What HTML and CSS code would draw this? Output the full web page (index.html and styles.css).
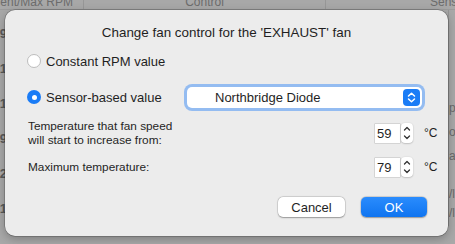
FILE: index.html
```html
<!DOCTYPE html>
<html lang="en">
<head>
<meta charset="UTF-8">
<title>Change fan control</title>
<link rel="stylesheet" href="styles.css">
</head>
<body>
<div class="window">
    <!-- dimmed table behind the sheet -->
    <div class="table">
        <div class="thead">
            <div class="th th-rpm"><span>Current/Max RPM</span></div>
            <div class="th th-control">Control</div>
            <div class="th th-sensor">Sensor</div>
        </div>
        <div class="tbody">
            <div class="col-num">
                <div class="cell">1799</div>
                <div class="cell">1201</div>
                <div class="cell">1201</div>
                <div class="cell">1799</div>
                <div class="cell">1202</div>
                <div class="cell">1201</div>
            </div>
            <div class="col-gap"></div>
            <div class="col-side">
                <div class="side-line l1">pi</div>
                <div class="side-line">oc</div>
                <div class="side-line">at</div>
                <div class="side-line l4">/l</div>
                <div class="side-line">/l</div>
            </div>
        </div>
    </div>

    <!-- sheet -->
    <div class="sheet">
        <div class="title">Change fan control for the 'EXHAUST' fan</div>
        <div class="body">
            <div class="radio-row">
                <span class="radio"></span>
                <span>Constant RPM value</span>
            </div>
            <div class="radio-row row-sensor">
                <span class="radio checked"></span>
                <span>Sensor-based value</span>
                <div class="popup">
                    <span class="popup-text">Northbridge Diode</span>
                    <span class="popup-arrow">
                        <svg width="17" height="17" viewBox="0 0 17 17">
                            <path d="M5.5 7 L8.5 4.2 L11.5 7 M5.5 10 L8.5 12.8 L11.5 10" fill="none" stroke="#fff" stroke-width="1.5" stroke-linecap="round" stroke-linejoin="round"/>
                        </svg>
                    </span>
                </div>
            </div>
            <div class="temp-row two-line">
                <div class="temp-label">Temperature that fan speed<br>will start to increase from:</div>
                <div class="field">59</div>
                <div class="stepper">
                    <svg width="12" height="20" viewBox="0 0 12 20">
                        <path d="M3.5 7 L6 4.5 L8.5 7 M3.5 13 L6 15.5 L8.5 13" fill="none" stroke="#333" stroke-width="1.3" stroke-linecap="round" stroke-linejoin="round"/>
                    </svg>
                </div>
                <div class="unit">°C</div>
            </div>
            <div class="temp-row">
                <div class="temp-label">Maximum temperature:</div>
                <div class="field">79</div>
                <div class="stepper">
                    <svg width="12" height="20" viewBox="0 0 12 20">
                        <path d="M3.5 7 L6 4.5 L8.5 7 M3.5 13 L6 15.5 L8.5 13" fill="none" stroke="#333" stroke-width="1.3" stroke-linecap="round" stroke-linejoin="round"/>
                    </svg>
                </div>
                <div class="unit">°C</div>
            </div>
            <div class="actions">
                <button class="btn">Cancel</button>
                <button class="btn btn-ok">OK</button>
            </div>
        </div>
    </div>
</div>
</body>
</html>
```
FILE: styles.css
```css
/* page */
body {
    margin: 0;
    overflow: hidden;
    font-family: "Liberation Sans", Arial, sans-serif;
}
.window {
    position: relative;
    width: 455px;
    height: 244px;
    background: #a8a8a8;
    overflow: hidden;
}

/* background table */
.table {
    margin-top: -5px;
}
.thead {
    display: flex;
    height: 14px;
    font-size: 12px;
    line-height: 14px;
    color: #6c6c6c;
    border-bottom: 1px solid #9c9c9c;
}
.th {
    border-right: 1px solid #979797;
    overflow: hidden;
    white-space: nowrap;
}
.th-rpm {
    width: 84px;
    display: flex;
    justify-content: flex-end;
    padding-right: 10px;
    box-sizing: border-box;
}
.th-control {
    width: 241px;
    text-align: center;
}
.th-sensor {
    flex: 1;
    border-right: none;
    padding-left: 104px;
}
.tbody {
    display: flex;
}
.col-num {
    width: 7px;
    padding-top: 6px;
}
.cell {
    height: 35px;
    line-height: 35px;
    display: flex;
    justify-content: flex-end;
    overflow: hidden;
    font-size: 13px;
    font-weight: bold;
    color: #5a5a5a;
}
.col-gap {
    flex: 1;
}
.col-side {
    width: 6px;
    padding-top: 86px;
    border-left: 1px solid #959595;
    overflow: hidden;
    font-size: 12px;
    color: #6a6a6a;
}
.side-line {
    height: 24px;
    line-height: 24px;
}
.side-line.l4 {
    margin-top: 14px;
    height: 19px;
}

/* sheet */
.sheet {
    position: absolute;
    left: 5px;
    top: 10px;
    width: 443px;
    height: 226px;
    box-sizing: border-box;
    padding-top: 15px;
    background: #ececec;
    border-radius: 10px;
    box-shadow: 0 0 0 0.5px rgba(0, 0, 0, 0.35), 0 3px 10px rgba(0, 0, 0, 0.25);
    color: #1f1f1f;
    font-size: 13px;
}
.title {
    text-align: center;
    line-height: 16px;
    font-size: 13.4px;
}
.body {
    padding: 0 26px 0 22px;
}

/* radios */
.radio-row {
    display: flex;
    align-items: center;
    gap: 5px;
    height: 20px;
    margin-top: 10px;
}
.row-sensor {
    height: 28px;
    margin-top: 12px;
}
.radio {
    width: 14px;
    height: 14px;
    box-sizing: border-box;
    border-radius: 50%;
    background: #fff;
    border: 1px solid #bdbdbd;
}
.radio.checked {
    border: none;
    background: #1a7cf6;
    display: flex;
    align-items: center;
    justify-content: center;
}
.radio.checked::after {
    content: "";
    width: 5px;
    height: 5px;
    border-radius: 50%;
    background: #fff;
}

/* popup button */
.popup {
    margin-left: auto;
    width: 235px;
    height: 21px;
    box-sizing: border-box;
    display: flex;
    align-items: center;
    padding: 0 2px 0 28px;
    background: #fff;
    border-radius: 5px;
    box-shadow: 0 0 0 3px #94bcf1, 0 0.5px 1px rgba(0, 0, 0, 0.3);
}
.popup-text {
    flex: 1;
}
.popup-arrow {
    width: 17px;
    height: 17px;
    border-radius: 4px;
    background: #1a7cf6;
    display: flex;
}

/* temperatures */
.temp-row {
    display: grid;
    grid-template-columns: 1fr 25px 12px 10px;
    align-items: center;
    height: 20px;
    margin-top: 10px;
}
.temp-row.two-line {
    height: 28px;
    margin-top: 8px;
}
.temp-label {
    font-size: 11.8px;
    line-height: 14px;
    padding-left: 1px;
}
.field {
    height: 19px;
    line-height: 19px;
    padding-left: 2px;
    background: #fff;
    box-shadow: 0 0 0 0.5px #bcbcbc;
}
.stepper {
    margin-left: 1px;
    width: 12px;
    height: 20px;
    background: #fff;
    border-radius: 4px;
    box-shadow: 0 0.5px 1.5px rgba(0, 0, 0, 0.3);
    display: flex;
}
.unit {
    margin-left: 12px;
    white-space: nowrap;
    font-size: 12px;
}

/* buttons */
.actions {
    display: flex;
    justify-content: flex-end;
    gap: 16px;
    margin-top: 20px;
    margin-right: -5px;
}
.btn {
    width: 67px;
    height: 20px;
    padding: 0;
    border: none;
    border-radius: 5px;
    background: #fff;
    color: #1f1f1f;
    font-family: "Liberation Sans", Arial, sans-serif;
    font-size: 13px;
    box-shadow: 0 0 0 0.5px rgba(0, 0, 0, 0.15), 0 0.5px 1.5px rgba(0, 0, 0, 0.3);
}
.btn-ok {
    width: 66px;
    background: linear-gradient(#2a8cfd, #0f74f0);
    color: #fff;
}
```
